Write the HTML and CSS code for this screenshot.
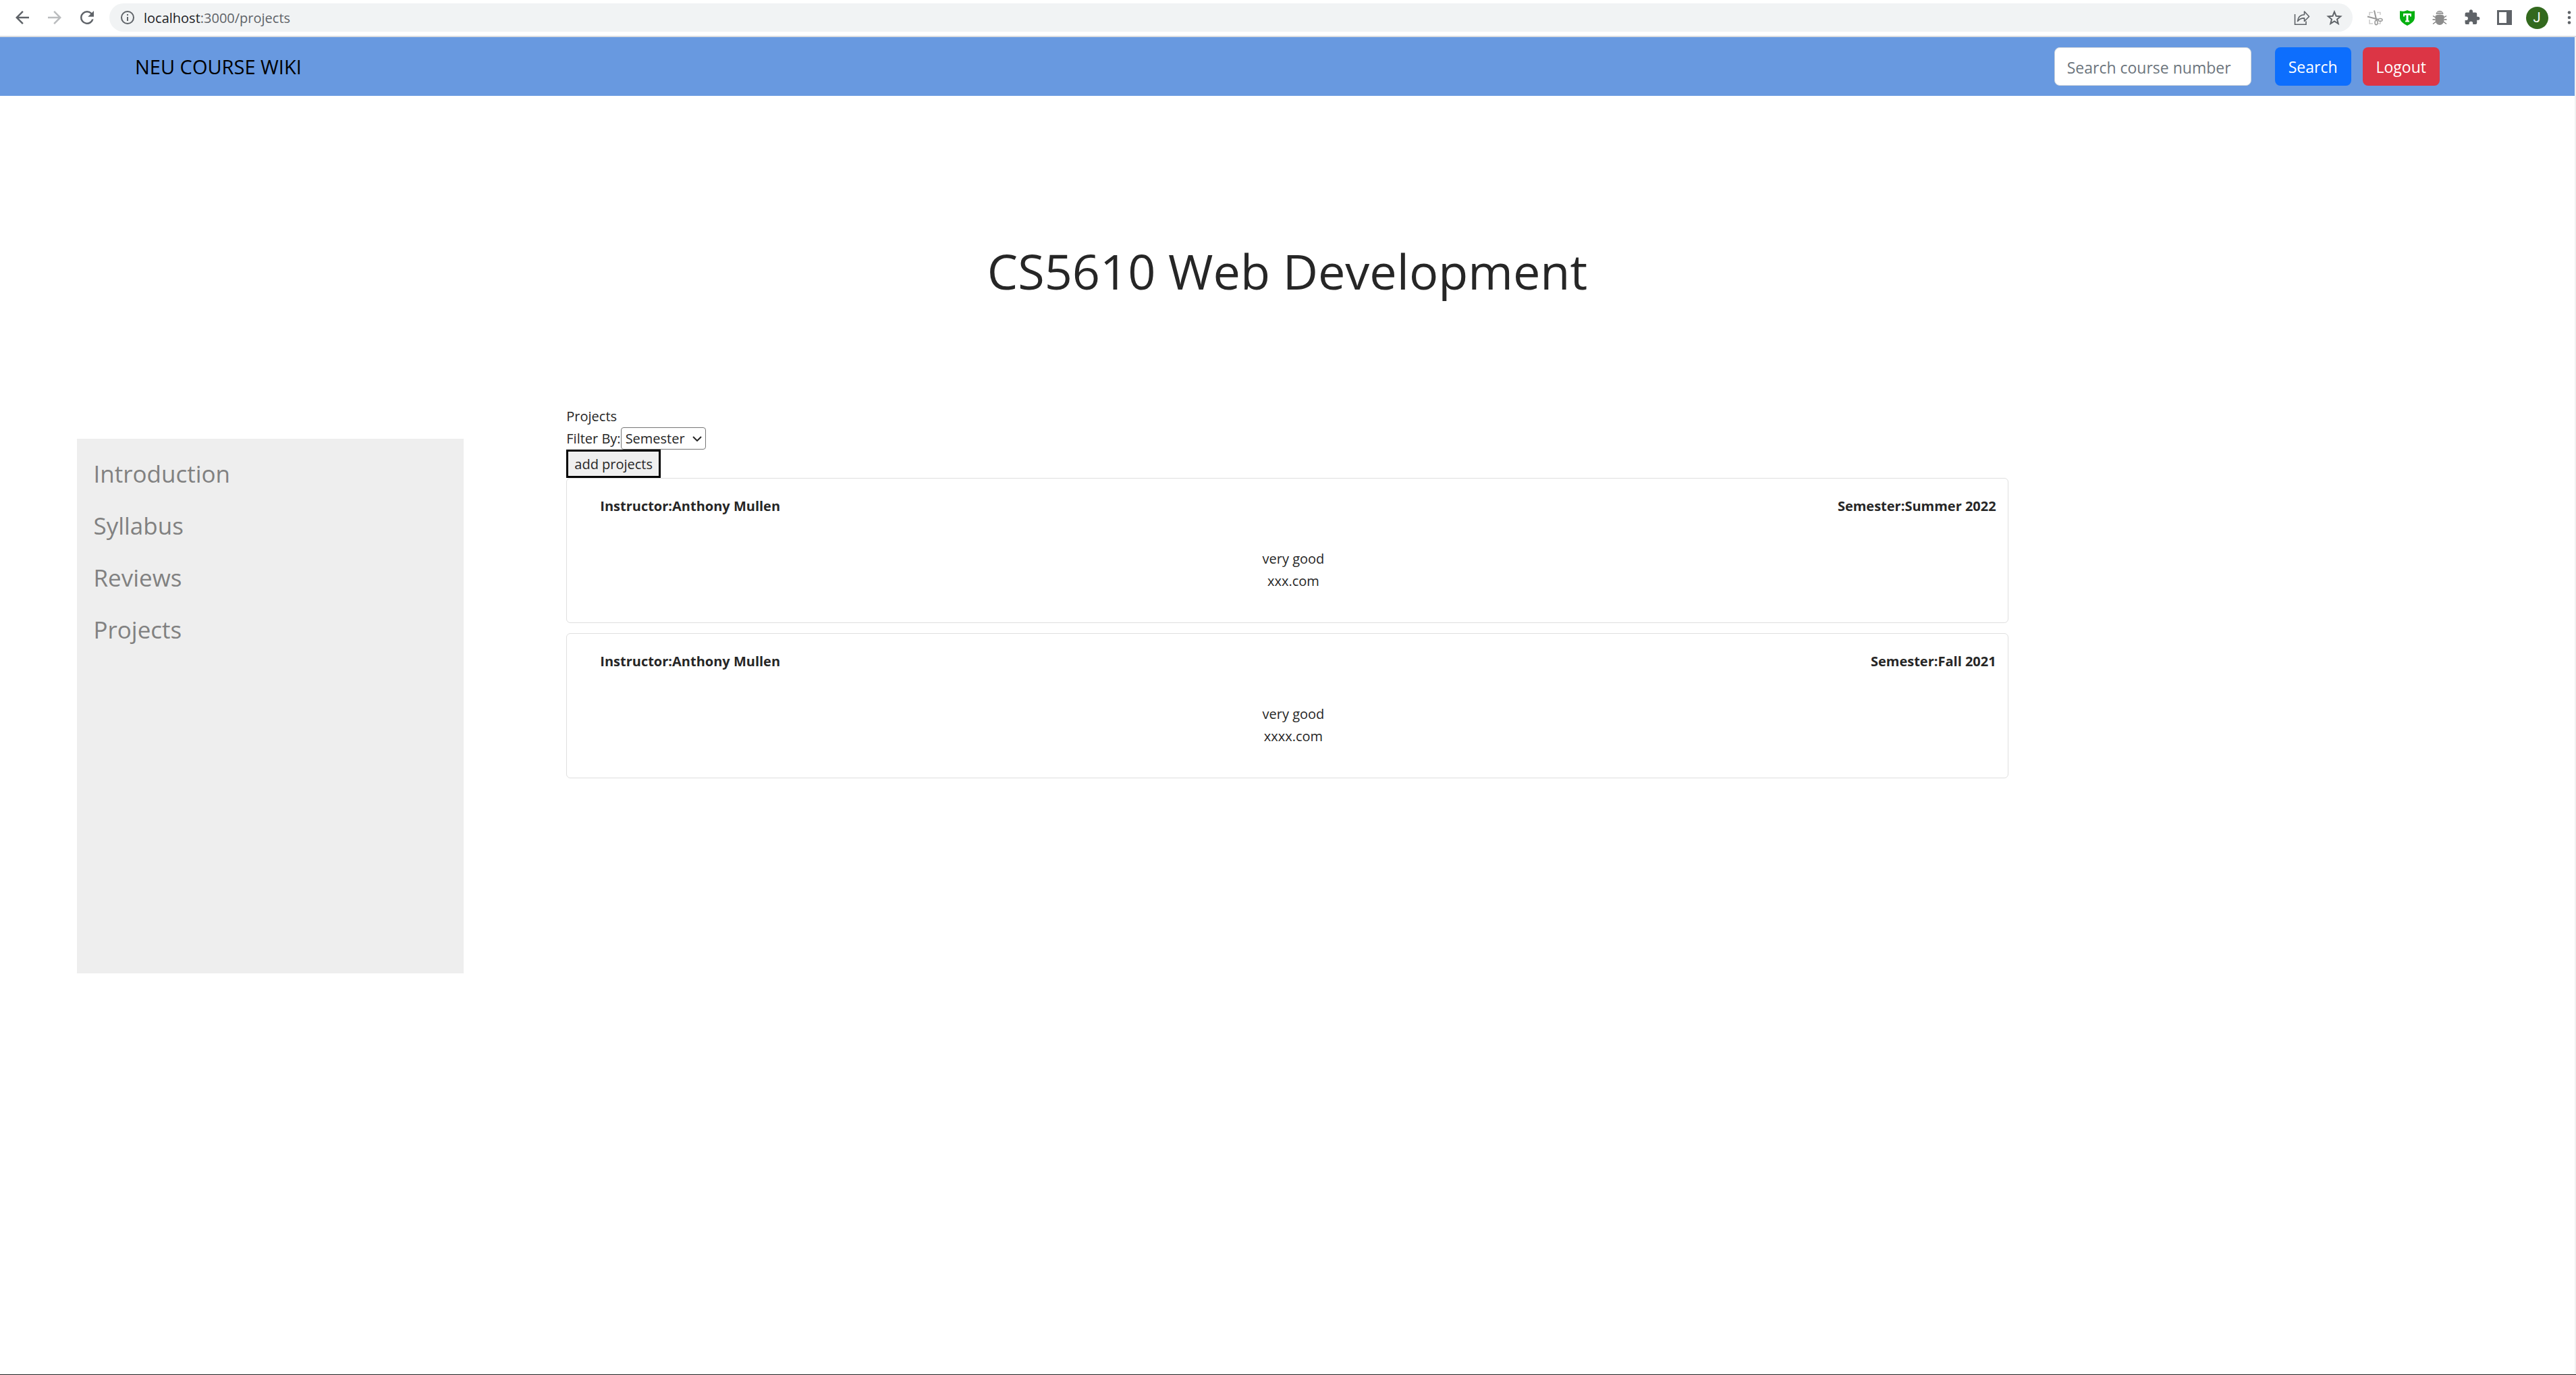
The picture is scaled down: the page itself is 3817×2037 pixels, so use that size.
FILE: index.html
```html
<!DOCTYPE html>
<html lang="en">
<head>
<meta charset="utf-8">
<title>NEU Course Wiki</title>
<link rel="stylesheet" href="styles.css">
</head>
<body>
<header class="toolbar">
  <button class="tool" type="button" aria-label="Back"><svg class="icon" viewBox="0 0 24 24"><path d="M20 11H7.83l5.59-5.59L12 4l-8 8 8 8 1.41-1.41L7.83 13H20z"/></svg></button>
  <button class="tool tool-disabled" type="button" aria-label="Forward"><svg class="icon" viewBox="0 0 24 24"><path d="M12 4l-1.41 1.41L16.17 11H4v2h12.170l-5.580 5.590L12 20l8-8z"/></svg></button>
  <button class="tool" type="button" aria-label="Reload"><svg class="icon" viewBox="0 0 24 24"><path d="M17.650 6.350A7.960 7.960 0 0 0 12 4a8 8 0 1 0 7.730 10h-2.080A6 6 0 1 1 12 6c1.660 0 3.140.69 4.220 1.780L13 11h7V4z"/></svg></button>
  <div class="address">
    <svg class="icon" viewBox="0 0 24 24"><path d="M11 17h2v-6h-2zm1-15a10 10 0 1 0 0 20 10 10 0 0 0 0-20m0 18a8 8 0 1 1 0-16 8 8 0 0 1 0 16M11 9h2V7h-2z" transform="translate(2.400 2.400) scale(.8)"/></svg>
    <span class="url"><span class="host">localhost</span>:3000/projects</span>
    <button class="tool" type="button" aria-label="Share"><svg class="icon" viewBox="0 0 30 30" fill="none" stroke="currentColor" stroke-width="1.600"><path d="M4.500 10v15.200h16.500V20.500"/><path d="M8.500 20.500c.5-6 3.500-9.500 10-9.800V6l7 7.500-7 7v-4.600c-4.500 0-7.500 1-10 4.600z" stroke-linejoin="round"/></svg></button>
    <button class="tool" type="button" aria-label="Bookmark"><svg class="icon" viewBox="0 0 30 30" fill="none" stroke="currentColor" stroke-width="2"><path d="M15 6.500l2.500 6.200 6.700.5-5.200 4.300 1.700 6.600-5.700-3.600-5.700 3.600 1.700-6.600-5.200-4.300 6.700-.5z"/></svg></button>
  </div>
  <button class="tool" type="button" aria-label="Screenshot"><svg class="icon" viewBox="0 0 30 30" fill="none"><path d="M7 12V7.500h5M18 7.500h5V11M7 18v6h5M23 19v5h-3" stroke="#ccc" stroke-width="1.500"/><path d="M14 4.500l3.500 15M4 13.500l16.500 4.500" stroke="#999" stroke-width="2"/><ellipse cx="17" cy="22.500" rx="2" ry="3.200" stroke="#999" stroke-width="1.500"/><ellipse cx="23" cy="18.500" rx="3" ry="2" stroke="#999" stroke-width="1.500"/></svg></button>
  <button class="tool" type="button" aria-label="Shield"><svg class="icon" viewBox="0 0 30 30"><path d="M15 4c3 1.800 7 2.200 11 1.300v9.700c0 5-4.500 8.800-11 12-6.500-3.200-11-7-11-12V5.300c4 .9 8 .5 11-1.300z" fill="#06b010"/><path d="M9 9h12v4.500h-2v-2h-2.500v8H18v2h-6v-2h1.500v-8H11v2H9z" fill="#fff"/></svg></button>
  <button class="tool" type="button" aria-label="Debugger"><svg class="icon" viewBox="0 0 30 30"><path d="M5 12.500l4 2.500M4.500 18h4M5 24.500l4-3M25 12.500L21 15M25.500 18h-4M25 24.500l-4-3" stroke="#777" stroke-width="1.300" fill="none"/><path d="M10 9.500c0-5.500 10-5.500 10 0z" fill="#bbb" stroke="#888"/><path d="M8.500 13c0-3 13-3 13 0v6c0 4-3 7-6.500 7s-6.500-3-6.500-7z" fill="#8c8c8c"/></svg></button>
  <button class="tool" type="button" aria-label="Extensions"><svg class="icon" viewBox="0 0 24 24"><path d="M20.500 11H19V7a2 2 0 0 0-2-2h-4V3.500a2.500 2.500 0 0 0-5 0V5H4a2 2 0 0 0-2 2v3.800h1.500a2.700 2.700 0 0 1 0 5.400H2V20c0 1.100.9 2 2 2h3.800v-1.500a2.700 2.700 0 0 1 5.400 0V22H17a2 2 0 0 0 2-2v-4h1.500a2.500 2.500 0 0 0 0-5z" transform="translate(2 1.800) scale(.83)"/></svg></button>
  <button class="tool" type="button" aria-label="Side panel"><svg class="icon" viewBox="0 0 30 30"><path d="M4 4h22v22H4zm3 3v16h11V7z" fill-rule="evenodd"/></svg></button>
  <button class="tool" type="button" aria-label="Profile"><span class="avatar">J</span></button>
  <button class="tool tool-menu" type="button" aria-label="Menu"><svg class="dots" viewBox="0 0 6 20"><circle cx="3" cy="2.500" r="2.300"/><circle cx="3" cy="10" r="2.300"/><circle cx="3" cy="17.500" r="2.300"/></svg></button>
</header>

<div class="page">
  <nav class="navbar">
    <a class="brand" href="/">NEU COURSE WIKI</a>
    <form class="search">
      <input class="search-input" type="text" placeholder="Search course number" aria-label="Search course number">
      <button class="btn btn-primary" type="submit">Search</button>
      <button class="btn btn-danger" type="button">Logout</button>
    </form>
  </nav>

  <h1 class="title">CS5610 Web Development</h1>

  <div class="layout">
    <aside class="sidebar">
      <a href="/introduction">Introduction</a>
      <a href="/syllabus">Syllabus</a>
      <a href="/reviews">Reviews</a>
      <a href="/projects">Projects</a>
    </aside>
    <main class="main">
      <div>Projects</div>
      <div class="filter">
        <label for="filter">Filter By:</label>
        <span class="select-wrap">
          <select class="select" id="filter"><option>Semester</option></select>
          <svg class="chevron" viewBox="0 0 14 8"><path d="M1 1l6 6 6-6" fill="none" stroke="currentColor" stroke-width="2"/></svg>
        </span>
      </div>
      <button class="add" type="button">add projects</button>
      <article class="card">
        <header class="card-head"><span>Instructor:Anthony Mullen</span><span>Semester:Summer 2022</span></header>
        <p>very good</p>
        <p>xxx.com</p>
      </article>
      <article class="card">
        <header class="card-head"><span>Instructor:Anthony Mullen</span><span>Semester:Fall 2021</span></header>
        <p>very good</p>
        <p>xxxx.com</p>
      </article>
    </main>
  </div>
</div>
</body>
</html>
```
FILE: styles.css
```css
* {
  box-sizing: border-box;
}

body {
  margin: 0;
  min-height: 100vh;
  display: flex;
  flex-direction: column;
  border-bottom: 1px solid #1f1f1f;
  background: #fff;
  color: #262626;
  font: 20px/33px "Open Sans", "Noto Sans", sans-serif;
}

button,
input,
select {
  font: inherit;
  color: inherit;
  margin: 0;
}

a {
  text-decoration: none;
}

/* Browser toolbar */
.toolbar {
  display: flex;
  align-items: center;
  height: 55px;
  padding: 0 0 1px 9px;
  border-bottom: 2px solid #dadce0;
  color: #5f6368;
}

.tool {
  flex: none;
  display: flex;
  align-items: center;
  justify-content: center;
  width: 48px;
  height: 42px;
  padding: 0;
  border: 0;
  background: none;
}

.tool-disabled {
  color: #babcbe;
}

.tool-menu {
  width: 34px;
  padding-left: 14px;
}

.icon {
  flex: none;
  width: 30px;
  height: 30px;
  fill: currentColor;
}

.icon[fill="none"] {
  fill: none;
}

.dots {
  width: 6px;
  height: 20px;
  fill: currentColor;
}

.address {
  flex: 1;
  display: flex;
  align-items: center;
  height: 42px;
  margin: 0 9px;
  padding: 0 3px 0 12px;
  border-radius: 21px;
  background: #f1f3f4;
}

.url {
  flex: 1;
  padding-left: 9px;
}

.host {
  color: #202124;
}

.avatar {
  width: 33px;
  height: 33px;
  border-radius: 50%;
  background: #33691e;
  color: #fff;
  font-family: Roboto, sans-serif;
  text-align: center;
}

/* Page */
.page {
  flex: 1;
  border-right: 2px solid #f1f1f1;
}

.navbar {
  display: flex;
  align-items: center;
  justify-content: space-between;
  padding: 15px 200px;
  background: #6899e0;
}

.brand {
  color: #000;
  font-size: 29px;
}

.search {
  display: flex;
  gap: 17px;
  font-size: 23px;
}

.search-input {
  width: 292px;
  height: 57px;
  margin-right: 18px;
  padding: 2px 18px 0;
  border: 1px solid #ced4da;
  border-radius: 8px;
  background: #fff;
}

.search-input::placeholder {
  color: #6c757d;
  opacity: 1;
}

.btn {
  height: 57px;
  padding: 2px 20px 0;
  border: 0;
  border-radius: 8px;
  color: #fff;
}

.btn-primary {
  background: #0d6efd;
}

.btn-danger {
  background: #dc3545;
}

.title {
  margin: 205px 0 145px;
  font-size: 72px;
  font-weight: 400;
  line-height: 108px;
  text-align: center;
}

.layout {
  display: flex;
  align-items: flex-start;
}

.sidebar {
  display: flex;
  flex-direction: column;
  width: 15%;
  min-height: 792px;
  margin: 50px 0 0 3%;
  padding: 13px 24px;
  background: #eee;
  font-size: 35px;
  line-height: 77px;
}

.sidebar a {
  color: #818181;
}

.main {
  width: 56%;
  margin-left: 4%;
}

.filter {
  display: flex;
}

.select-wrap {
  position: relative;
}

.select {
  display: block;
  width: 126px;
  height: 33px;
  padding: 0 6px;
  border: 1px solid #767676;
  border-radius: 4px;
  background: #fff;
  line-height: 30px;
  appearance: none;
}

.chevron {
  position: absolute;
  top: 13px;
  right: 6px;
  width: 14px;
  height: 8px;
  pointer-events: none;
}

.add {
  display: block;
  height: 42px;
  padding: 0 9px;
  border: 3px solid #000;
  background: #efefef;
}

.card {
  margin-bottom: 15px;
  padding: 24px 17px 45px 35px;
  border: 1px solid #dfdfdf;
  border-radius: 6px;
}

.card-head {
  display: flex;
  justify-content: space-between;
  margin-bottom: 45px;
  padding-left: 14px;
  font-weight: 700;
}

.card p {
  margin: 0;
  text-align: center;
}
```
